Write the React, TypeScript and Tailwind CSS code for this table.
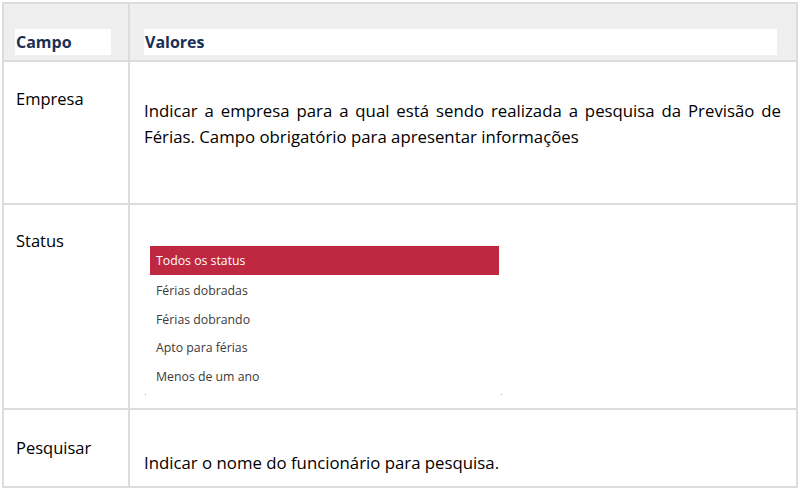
import React from "react";

const border = "border-[#dcdcdc]";

export default function App() {
  return (
    <div className="w-[803px] h-[494px] bg-white relative overflow-hidden" style={{ fontFamily: "'Open Sans', 'Noto Sans', sans-serif" }}>
      <div className="ml-[2px] mt-[2px] w-[796px] border-2 border-[#dcdcdc] text-black">
        {/* header */}
        <div className="flex h-[58px] bg-[#efefef] border-b-2 border-[#dcdcdc]">
          <div className="w-[126px] shrink-0 border-r-2 border-[#dcdcdc] pl-[11px] pt-[25px]">
            <div className="w-[96px] h-[26px] bg-white pl-[1px] text-[16px] font-bold leading-[26px] text-[#1b2f55]">Campo</div>
          </div>
          <div className="flex-1 pl-[14px] pt-[25px]">
            <div className="w-[633px] h-[26px] bg-white pl-[1px] text-[16px] font-bold leading-[26px] text-[#1b2f55]">Valores</div>
          </div>
        </div>
        {/* Empresa */}
        <div className={`flex h-[143px] border-b-2 ${border}`}>
          <div className={`w-[126px] shrink-0 border-r-2 ${border} pl-[12px] pt-[26px] text-[16.5px] leading-[22px]`}>Empresa</div>
          <div className="flex-1 pl-[14px] pr-[15px] pt-[36px] text-[16.8px] leading-[26px] text-justify">
            Indicar a empresa para a qual está sendo realizada a pesquisa da Previsão de Férias. Campo obrigatório para apresentar informações
          </div>
        </div>
        {/* Status */}
        <div className={`flex h-[205px] border-b-2 ${border}`}>
          <div className={`w-[126px] shrink-0 border-r-2 ${border} pl-[12px] pt-[25px] text-[16.5px] leading-[22px]`}>Status</div>
          <div className="flex-1 pl-[20px] pt-[41px] relative">
            <div className="w-[349px] text-[12.3px] text-[#3a3a3a]">
              <div className="h-[29px] bg-[#be2841] text-white leading-[29px] pl-[6px]">Todos os status</div>
              <div className="h-[29px] leading-[31px] pl-[6px]">Férias dobradas</div>
              <div className="h-[29px] leading-[31px] pl-[6px]">Férias dobrando</div>
              <div className="h-[29px] leading-[29px] pl-[6px]">Apto para férias</div>
              <div className="h-[29px] leading-[29px] pl-[6px]">Menos de um ano</div>
            </div>
            <div className="absolute left-[15px] top-[189px] w-[1px] h-[1px] bg-[#8aa8d0]" />
            <div className="absolute left-[371px] top-[189px] w-[1px] h-[1px] bg-[#8aa8d0]" />
          </div>
        </div>
        {/* Pesquisar */}
        <div className="flex h-[76px]">
          <div className={`w-[126px] shrink-0 border-r-2 ${border} pl-[12px] pt-[27px] text-[16.5px] leading-[22px]`}>Pesquisar</div>
          <div className="flex-1 pl-[14px] pt-[42px] text-[16.8px] leading-[22px]">
            Indicar o nome do funcionário para pesquisa.
          </div>
        </div>
      </div>
    </div>
  );
}
